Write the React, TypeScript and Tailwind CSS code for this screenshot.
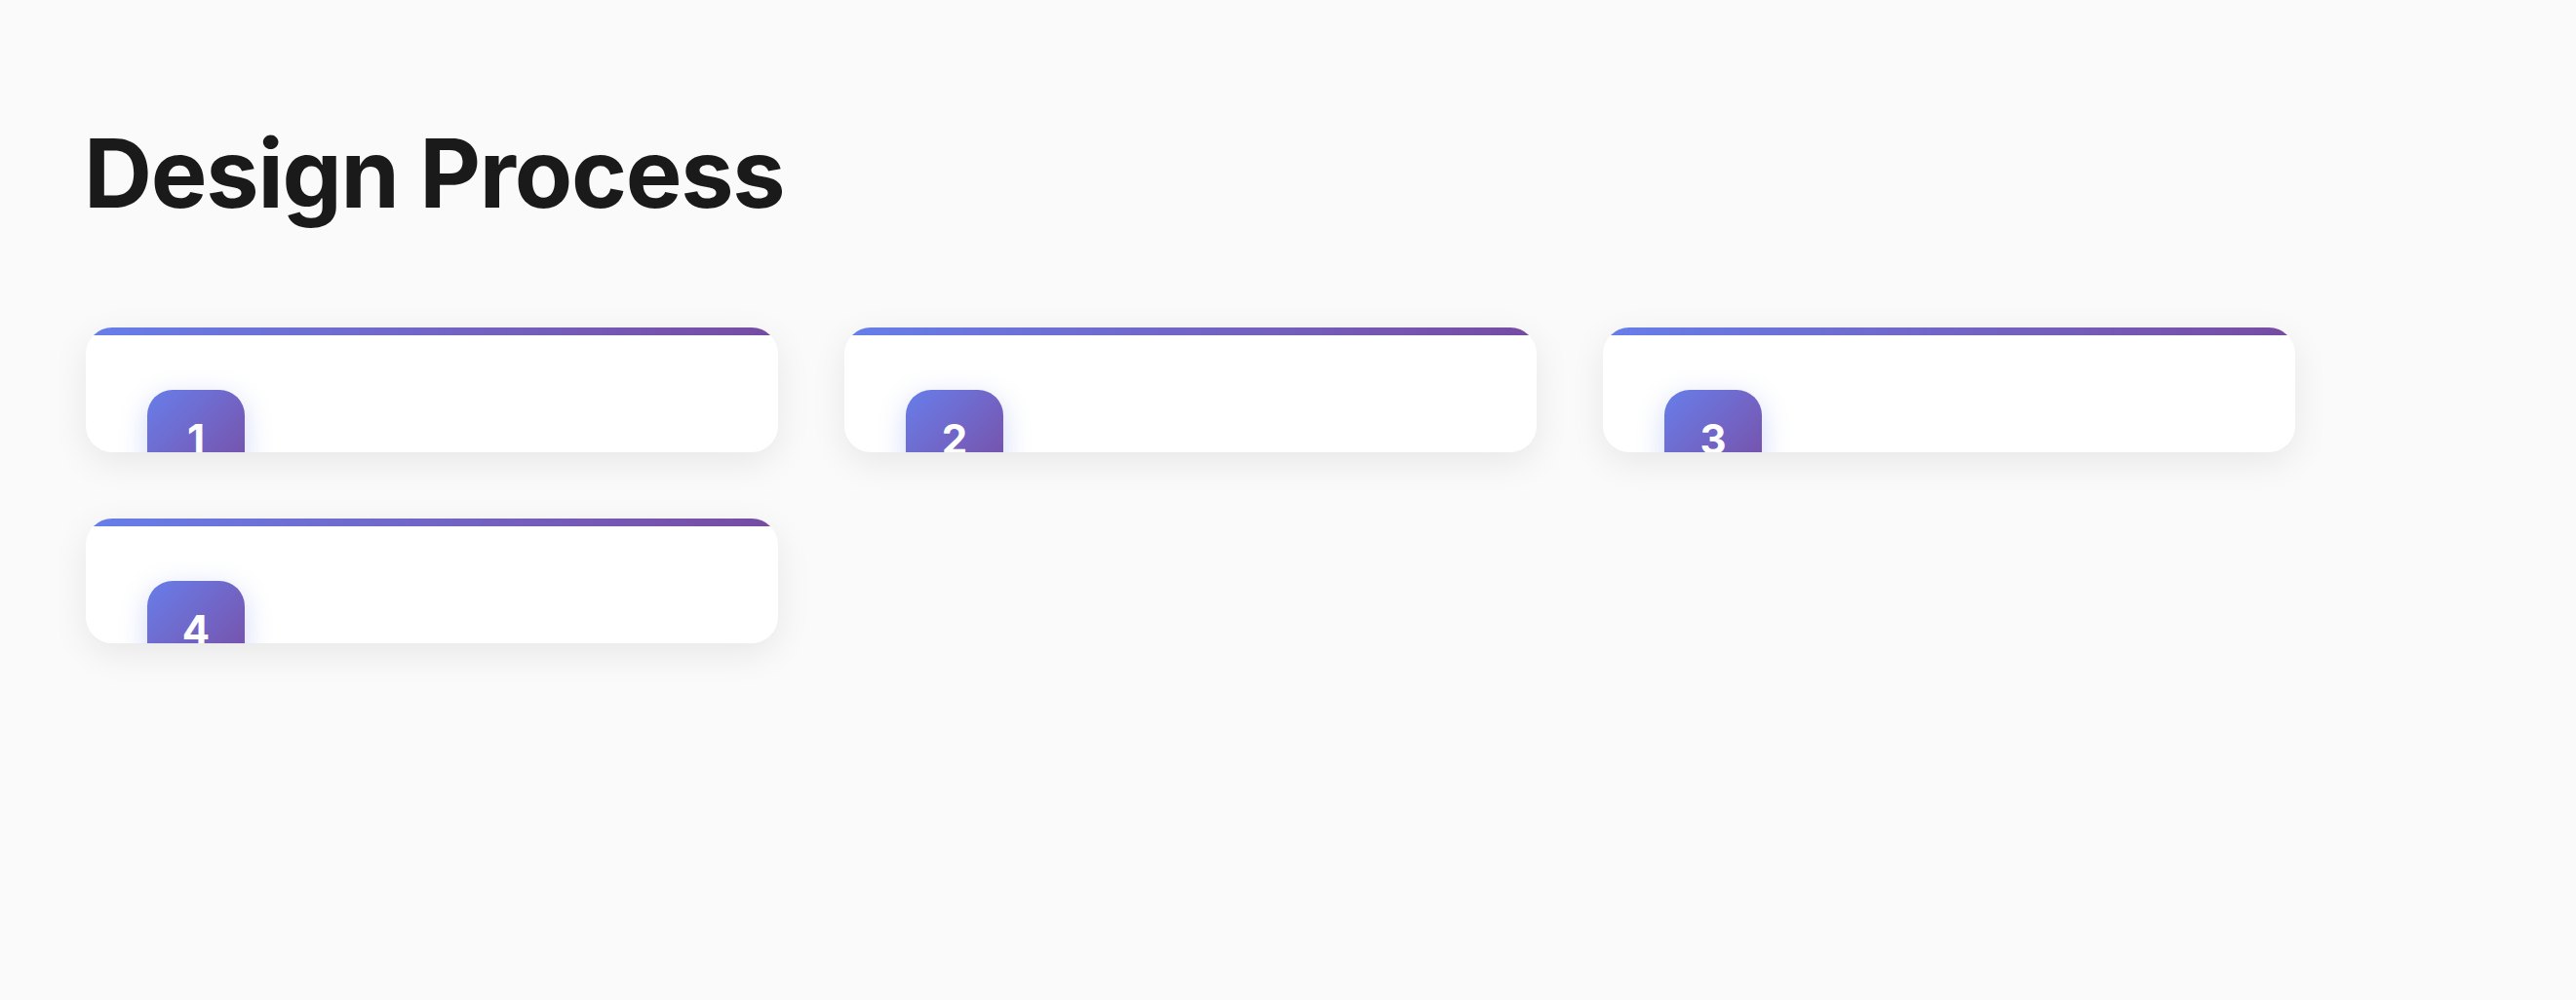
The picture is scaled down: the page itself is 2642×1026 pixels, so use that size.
const steps = [1, 2, 3, 4]

function StepCard({ n }: { n: number }) {
  return (
    <div className="relative h-[128px] overflow-hidden rounded-[27px] bg-white px-[63px] pt-[64px] shadow-[0_10px_36px_rgba(0,0,0,0.08)]">
      <div className="absolute inset-x-0 top-0 h-[8px] bg-gradient-to-r from-[#667eea] to-[#764ba2]" />
      <div className="flex h-[100px] w-[100px] items-center justify-center rounded-[26px] bg-gradient-to-br from-[#667eea] to-[#764ba2] text-[42px] font-bold text-white shadow-[0_8px_28px_rgba(102,126,234,0.3)]">
        {n}
      </div>
    </div>
  )
}

export default function App() {
  return (
    <div className="min-h-screen bg-[#fafafa] pl-[88px] pt-[120px] font-['Inter',sans-serif]">
      <h1 className="-ml-[2px] mb-[100px] text-[97px] leading-[1.2] font-bold tracking-[-0.013em] text-[#1a1a1a]">
        Design Process
      </h1>
      <div className="grid w-[2266px] grid-cols-3 gap-[68px]">
        {steps.map((n) => (
          <StepCard key={n} n={n} />
        ))}
      </div>
    </div>
  )
}
